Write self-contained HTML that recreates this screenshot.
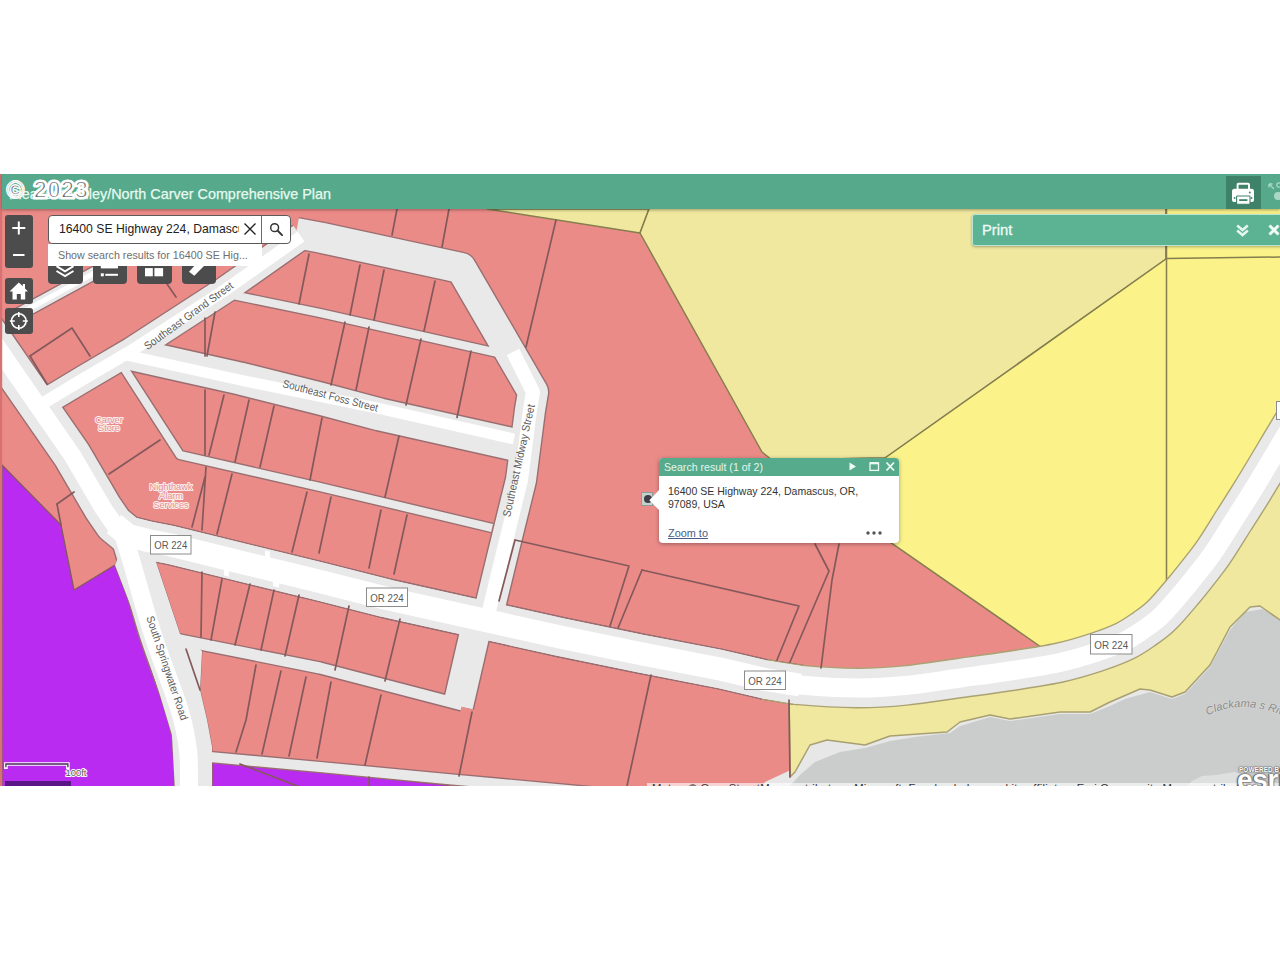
<!DOCTYPE html>
<html lang="en">
<head>
<meta charset="utf-8">
<title>Pleasant Valley/North Carver Comprehensive Plan</title>
<style>
*{box-sizing:border-box;margin:0;padding:0}
html,body{width:1280px;height:960px;background:#fff;overflow:hidden;font-family:"Liberation Sans",sans-serif}
#app{position:absolute;left:0;top:174px;width:1280px;height:612px;overflow:hidden;background:#eb8b88}
#map{position:absolute;left:0;top:0;width:1280px;height:612px;display:block}
.abs{position:absolute}
#hdr{left:2px;top:0.4px;width:1278px;height:35px;background:#56a98b;box-shadow:0 1px 3px rgba(0,0,0,.35)}
#title{left:9px;top:11.6px;font-size:14.4px;-webkit-text-stroke:.25px #e6faf0;color:#e6faf0;white-space:nowrap;letter-spacing:0}
#wm{left:5px;top:1px;font-family:"Liberation Serif",serif;font-weight:bold;font-size:28px;line-height:32px;color:#fff;white-space:nowrap;-webkit-text-stroke:0.6px #444;paint-order:stroke fill}
.dk{background:#4c4c4c;border-radius:3px}
</style>
</head>
<body>
<div id="app">
<svg id="map" viewBox="0 174 1280 612">
<polygon points="2,465 61,525 74,590 115,565 135,617 160,695 168,720 172.5,738 174.5,760 175.5,790 2,790" fill="#b92bf1" stroke="#85595b" stroke-width="1.3" stroke-linejoin="round" />
<polygon points="212,761 320,771.5 447,785 460,790 212,790" fill="#b92bf1" stroke="#85595b" stroke-width="1.3" stroke-linejoin="round" />
<polygon points="487,209 640,233 649,209" fill="#f0e89f" stroke="#857e4e" stroke-width="1.5" stroke-linejoin="round" />
<polygon points="649,209 640,233 762,452 772,460 885,458 1166,259 1166,200 649,200" fill="#f0e89f" stroke="#857e4e" stroke-width="1.5" stroke-linejoin="round" />
<polygon points="1166,200 1166,259 885,458 772,460 1041,647 1060,662.5 1097,652 1125,641 1145,628.5 1162,615 1184,590 1204,565 1215,550 1234,520 1253,490 1283,440 1295,420 1295,200" fill="#fbf38a" stroke="#857e4e" stroke-width="1.5" stroke-linejoin="round" />
<polygon points="760,790 765,782 795,768 810,741 827,736 865,742 890,733 947,729 960,719 990,712 1010,716 1060,709 1090,709 1110,699 1140,686 1150,687 1172,694 1185,689 1207,663 1227,625 1248,604 1262,603 1295,618 1295,790" fill="#e7e7e7" />
<polygon points="786,790 800,775 815,762 840,752 865,748 890,741 915,737 950,733 960,726 990,717 1010,721 1060,714 1090,714 1110,706 1125,699 1150,692 1172,699 1185,694 1210,667 1230,630 1245,612 1262,609 1290,624 1290,790" fill="#cbcdcd" />
<polygon points="789,690 857,688 905,685.5 960,678 1010,671 1060,662.5 1097,652 1125,641 1145,628.5 1162,615 1184,590 1204,565 1215,550 1234,520 1253,490 1283,440 1295,420 1295,622 1280,620 1260,606 1250,607 1230,627 1210,665 1185,692 1172,697 1150,690 1140,689 1110,702 1090,712 1060,712 1010,719 990,715 960,722 947,732 890,736 865,745 827,740 810,745 795,772 790,777" fill="#f0e89f" stroke="#a8a070" stroke-width="1.5" stroke-linejoin="round" />
<polyline points="1166.5,209 1166.5,590" fill="none" stroke="#857e4e" stroke-width="1.5" stroke-linecap="round" stroke-linejoin="round" />
<polyline points="1166.5,258.5 1280,257" fill="none" stroke="#857e4e" stroke-width="1.5" stroke-linecap="round" stroke-linejoin="round" />
<polyline points="8,320 34,306 100,270 160,240" fill="none" stroke="#9a6e70" stroke-width="14.8" stroke-linecap="butt" stroke-linejoin="round" />
<polyline points="38,406 45,402 85,378 131,351 225,290 301,236.5" fill="none" stroke="#9a6e70" stroke-width="28.8" stroke-linecap="butt" stroke-linejoin="round" />
<polyline points="296,233 320,237.5 461,268 533,392 530,410 521,480 505,545 488,615" fill="none" stroke="#9a6e70" stroke-width="32.8" stroke-linecap="butt" stroke-linejoin="round" />
<polyline points="126,353 240,378.5 320,398.5 380,414.5 514,444.5" fill="none" stroke="#9a6e70" stroke-width="34.8" stroke-linecap="butt" stroke-linejoin="round" />
<polyline points="235,295.5 320,313 500,353.5" fill="none" stroke="#9a6e70" stroke-width="10.8" stroke-linecap="butt" stroke-linejoin="round" />
<polyline points="122,365 180,455 320,487 492,528" fill="none" stroke="#9a6e70" stroke-width="10.8" stroke-linecap="butt" stroke-linejoin="round" />
<polyline points="175,639 320,668 462,705" fill="none" stroke="#9a6e70" stroke-width="13.8" stroke-linecap="butt" stroke-linejoin="round" />
<polyline points="190,755 210,757 320,767 447,779 600,793" fill="none" stroke="#9a6e70" stroke-width="12.8" stroke-linecap="butt" stroke-linejoin="round" />
<polyline points="476,628 458,706" fill="none" stroke="#9a6e70" stroke-width="32.8" stroke-linecap="butt" stroke-linejoin="round" />
<path d="M120,525 C121.8,530.8 125.5,541.7 131,560 C136.5,578.3 144.9,610.0 153,635 C161.1,660.0 173.7,690.8 179.5,710 C185.3,729.2 186.4,736.3 188,750 C189.6,763.7 188.8,785.0 189,792" fill="none" stroke="#9a6e70" stroke-width="28.8" stroke-linecap="butt" stroke-linejoin="round" />
<polyline points="-20,322 20,380 72,455 103,508 114,524 128,535.5 148,540.5 171,545 240,562 320,581.5 387,598.5 560,637 640,653.5 720,669 765,679.5 800,685" fill="none" stroke="#9a6e70" stroke-width="40.8" stroke-linecap="butt" stroke-linejoin="round" />
<polyline points="128,535.5 148,540.5 171,545 240,562 320,581.5 387,598.5 560,637 640,653.5 720,669 765,679.5 800,685" fill="none" stroke="#9a6e70" stroke-width="40.8" stroke-linecap="butt" stroke-linejoin="round" />
<path d="M765,679.5 C770.8,680.4 784.7,683.6 800,685 C815.3,686.4 839.5,687.9 857,688 C874.5,688.1 887.8,687.2 905,685.5 C922.2,683.8 942.5,680.4 960,678 C977.5,675.6 993.3,673.6 1010,671 C1026.7,668.4 1045.5,665.7 1060,662.5 C1074.5,659.3 1086.2,655.6 1097,652 C1107.8,648.4 1117.0,644.9 1125,641 C1133.0,637.1 1138.8,632.8 1145,628.5 C1151.2,624.2 1155.5,621.4 1162,615 C1168.5,608.6 1177.0,598.3 1184,590 C1191.0,581.7 1198.8,571.7 1204,565 C1209.2,558.3 1210.0,557.5 1215,550 C1220.0,542.5 1227.7,530.0 1234,520 C1240.3,510.0 1244.8,503.3 1253,490 C1261.2,476.7 1276.0,451.7 1283,440 C1290.0,428.3 1293.0,423.3 1295,420" fill="none" stroke="#aaa273" stroke-width="40.8" stroke-linecap="butt" stroke-linejoin="round" />
<polygon points="127,537 150,556 156,562 180,634 202,651 200,690 207,720 212,747 212,790 175,790 172,735 160,695 135,617 115,565" fill="#e9e9e9" stroke="#9a6e70" stroke-width="1" stroke-linejoin="round" />
<polyline points="8,320 34,306 100,270 160,240" fill="none" stroke="#e9e9e9" stroke-width="12" stroke-linecap="butt" stroke-linejoin="round" />
<polyline points="38,406 45,402 85,378 131,351 225,290 301,236.5" fill="none" stroke="#e9e9e9" stroke-width="26" stroke-linecap="butt" stroke-linejoin="round" />
<polyline points="296,233 320,237.5 461,268 533,392 530,410 521,480 505,545 488,615" fill="none" stroke="#e9e9e9" stroke-width="30" stroke-linecap="butt" stroke-linejoin="round" />
<polyline points="126,353 240,378.5 320,398.5 380,414.5 514,444.5" fill="none" stroke="#e9e9e9" stroke-width="32" stroke-linecap="butt" stroke-linejoin="round" />
<polyline points="235,295.5 320,313 500,353.5" fill="none" stroke="#e9e9e9" stroke-width="8" stroke-linecap="butt" stroke-linejoin="round" />
<polyline points="122,365 180,455 320,487 492,528" fill="none" stroke="#e9e9e9" stroke-width="8" stroke-linecap="butt" stroke-linejoin="round" />
<polyline points="175,639 320,668 462,705" fill="none" stroke="#e9e9e9" stroke-width="11" stroke-linecap="butt" stroke-linejoin="round" />
<polyline points="190,755 210,757 320,767 447,779 600,793" fill="none" stroke="#e9e9e9" stroke-width="10" stroke-linecap="butt" stroke-linejoin="round" />
<polyline points="476,628 458,706" fill="none" stroke="#e9e9e9" stroke-width="30" stroke-linecap="butt" stroke-linejoin="round" />
<path d="M120,525 C121.8,530.8 125.5,541.7 131,560 C136.5,578.3 144.9,610.0 153,635 C161.1,660.0 173.7,690.8 179.5,710 C185.3,729.2 186.4,736.3 188,750 C189.6,763.7 188.8,785.0 189,792" fill="none" stroke="#e9e9e9" stroke-width="26" stroke-linecap="butt" stroke-linejoin="round" />
<polyline points="-20,322 20,380 72,455 103,508 114,524 128,535.5 148,540.5 171,545 240,562 320,581.5 387,598.5 560,637 640,653.5 720,669 765,679.5 800,685" fill="none" stroke="#e9e9e9" stroke-width="38" stroke-linecap="butt" stroke-linejoin="round" />
<polyline points="128,535.5 148,540.5 171,545 240,562 320,581.5 387,598.5 560,637 640,653.5 720,669 765,679.5 800,685" fill="none" stroke="#e9e9e9" stroke-width="38" stroke-linecap="butt" stroke-linejoin="round" />
<path d="M765,679.5 C770.8,680.4 784.7,683.6 800,685 C815.3,686.4 839.5,687.9 857,688 C874.5,688.1 887.8,687.2 905,685.5 C922.2,683.8 942.5,680.4 960,678 C977.5,675.6 993.3,673.6 1010,671 C1026.7,668.4 1045.5,665.7 1060,662.5 C1074.5,659.3 1086.2,655.6 1097,652 C1107.8,648.4 1117.0,644.9 1125,641 C1133.0,637.1 1138.8,632.8 1145,628.5 C1151.2,624.2 1155.5,621.4 1162,615 C1168.5,608.6 1177.0,598.3 1184,590 C1191.0,581.7 1198.8,571.7 1204,565 C1209.2,558.3 1210.0,557.5 1215,550 C1220.0,542.5 1227.7,530.0 1234,520 C1240.3,510.0 1244.8,503.3 1253,490 C1261.2,476.7 1276.0,451.7 1283,440 C1290.0,428.3 1293.0,423.3 1295,420" fill="none" stroke="#e9e9e9" stroke-width="38" stroke-linecap="butt" stroke-linejoin="round" />
<polygon points="127,537 150,556 156,562 180,634 202,651 200,690 207,720 212,747 212,790 175,790 172,735 160,695 135,617 115,565" fill="#e9e9e9" />
<polyline points="8,320 34,306 100,270 160,240" fill="none" stroke="#fff" stroke-width="5" stroke-linecap="butt" stroke-linejoin="round" />
<polyline points="38,406 45,402 85,378 131,351 225,290 301,236.5" fill="none" stroke="#fff" stroke-width="12" stroke-linecap="butt" stroke-linejoin="round" />
<polyline points="126,355 240,380 380,408.7 514,439" fill="none" stroke="#fff" stroke-width="11" stroke-linecap="butt" stroke-linejoin="round" />
<path d="M120,525 C121.8,530.8 125.5,541.7 131,560 C136.5,578.3 144.9,610.0 153,635 C161.1,660.0 173.7,690.8 179.5,710 C185.3,729.2 186.4,736.3 188,750 C189.6,763.7 188.8,785.0 189,792" fill="none" stroke="#fff" stroke-width="18" stroke-linecap="butt" stroke-linejoin="round" />
<path d="M765,679.5 C770.8,680.4 784.7,683.6 800,685 C815.3,686.4 839.5,687.9 857,688 C874.5,688.1 887.8,687.2 905,685.5 C922.2,683.8 942.5,680.4 960,678 C977.5,675.6 993.3,673.6 1010,671 C1026.7,668.4 1045.5,665.7 1060,662.5 C1074.5,659.3 1086.2,655.6 1097,652 C1107.8,648.4 1117.0,644.9 1125,641 C1133.0,637.1 1138.8,632.8 1145,628.5 C1151.2,624.2 1155.5,621.4 1162,615 C1168.5,608.6 1177.0,598.3 1184,590 C1191.0,581.7 1198.8,571.7 1204,565 C1209.2,558.3 1210.0,557.5 1215,550 C1220.0,542.5 1227.7,530.0 1234,520 C1240.3,510.0 1244.8,503.3 1253,490 C1261.2,476.7 1276.0,451.7 1283,440 C1290.0,428.3 1293.0,423.3 1295,420" fill="none" stroke="#fff" stroke-width="19" stroke-linecap="butt" stroke-linejoin="round" />
<polyline points="513,352 533,392 530,410 521,480 505,545 488,615" fill="none" stroke="#fff" stroke-width="14" stroke-linecap="butt" stroke-linejoin="round" />
<polyline points="-20,322 20,380 72,455 103,508 114,524 128,535.5" fill="none" stroke="#fff" stroke-width="17.5" stroke-linecap="butt" stroke-linejoin="round" />
<polyline points="114,524 128,535.5 148,540.5 171,545 240,562 320,581.5 387,598.5 560,637 640,653.5 720,669 765,679.5 800,685" fill="none" stroke="#fff" stroke-width="23" stroke-linecap="butt" stroke-linejoin="round" />
<polygon points="265,550.5 270,551.5 270,561 265,560" fill="#fff" />
<polygon points="224,566 229,567 229,576.5 224,575.5" fill="#fff" />
<polygon points="273,578 279,579.3 279,587.5 273,586.2" fill="#fff" />
<polyline points="397,209 392,235" fill="none" stroke="#85595b" stroke-width="1.7" stroke-linecap="round" stroke-linejoin="round" />
<polyline points="449,209 442,247" fill="none" stroke="#85595b" stroke-width="1.7" stroke-linecap="round" stroke-linejoin="round" />
<polyline points="556,220 526,347" fill="none" stroke="#85595b" stroke-width="1.7" stroke-linecap="round" stroke-linejoin="round" />
<polyline points="309,254 299,304" fill="none" stroke="#85595b" stroke-width="1.7" stroke-linecap="round" stroke-linejoin="round" />
<polyline points="360,265 350,315" fill="none" stroke="#85595b" stroke-width="1.7" stroke-linecap="round" stroke-linejoin="round" />
<polyline points="384,270 374,320" fill="none" stroke="#85595b" stroke-width="1.7" stroke-linecap="round" stroke-linejoin="round" />
<polyline points="435,281 424,331" fill="none" stroke="#85595b" stroke-width="1.7" stroke-linecap="round" stroke-linejoin="round" />
<polyline points="345,322 331,385" fill="none" stroke="#85595b" stroke-width="1.7" stroke-linecap="round" stroke-linejoin="round" />
<polyline points="369,327 356,390" fill="none" stroke="#85595b" stroke-width="1.7" stroke-linecap="round" stroke-linejoin="round" />
<polyline points="421,339 406,405" fill="none" stroke="#85595b" stroke-width="1.7" stroke-linecap="round" stroke-linejoin="round" />
<polyline points="471,351 457,417.5" fill="none" stroke="#85595b" stroke-width="1.7" stroke-linecap="round" stroke-linejoin="round" />
<polyline points="205,318 205,356" fill="none" stroke="#85595b" stroke-width="1.7" stroke-linecap="round" stroke-linejoin="round" />
<polyline points="215,312 207,356" fill="none" stroke="#85595b" stroke-width="1.7" stroke-linecap="round" stroke-linejoin="round" />
<polyline points="205,390 205,455" fill="none" stroke="#85595b" stroke-width="1.7" stroke-linecap="round" stroke-linejoin="round" />
<polyline points="224,395 209,455" fill="none" stroke="#85595b" stroke-width="1.7" stroke-linecap="round" stroke-linejoin="round" />
<polyline points="249,400 235,462" fill="none" stroke="#85595b" stroke-width="1.7" stroke-linecap="round" stroke-linejoin="round" />
<polyline points="274,406 260,467" fill="none" stroke="#85595b" stroke-width="1.7" stroke-linecap="round" stroke-linejoin="round" />
<polyline points="322,418 310,480" fill="none" stroke="#85595b" stroke-width="1.7" stroke-linecap="round" stroke-linejoin="round" />
<polyline points="399,436 385,497" fill="none" stroke="#85595b" stroke-width="1.7" stroke-linecap="round" stroke-linejoin="round" />
<polyline points="206,467 202,530" fill="none" stroke="#85595b" stroke-width="1.7" stroke-linecap="round" stroke-linejoin="round" />
<polyline points="205,477 192,527" fill="none" stroke="#85595b" stroke-width="1.7" stroke-linecap="round" stroke-linejoin="round" />
<polyline points="232,474 217,534" fill="none" stroke="#85595b" stroke-width="1.7" stroke-linecap="round" stroke-linejoin="round" />
<polyline points="307,492 292,552" fill="none" stroke="#85595b" stroke-width="1.7" stroke-linecap="round" stroke-linejoin="round" />
<polyline points="331,497 319,553" fill="none" stroke="#85595b" stroke-width="1.7" stroke-linecap="round" stroke-linejoin="round" />
<polyline points="381,510 369,568" fill="none" stroke="#85595b" stroke-width="1.7" stroke-linecap="round" stroke-linejoin="round" />
<polyline points="407,515 394,574" fill="none" stroke="#85595b" stroke-width="1.7" stroke-linecap="round" stroke-linejoin="round" />
<polyline points="109,474 160,440" fill="none" stroke="#85595b" stroke-width="1.7" stroke-linecap="round" stroke-linejoin="round" />
<polyline points="57,504 61,525" fill="none" stroke="#85595b" stroke-width="1.7" stroke-linecap="round" stroke-linejoin="round" />
<polyline points="57,504 74,492" fill="none" stroke="#85595b" stroke-width="1.7" stroke-linecap="round" stroke-linejoin="round" />
<polyline points="30,356 72,328 90,356" fill="none" stroke="#85595b" stroke-width="1.7" stroke-linecap="round" stroke-linejoin="round" />
<polyline points="30,356 47,384" fill="none" stroke="#85595b" stroke-width="1.7" stroke-linecap="round" stroke-linejoin="round" />
<polyline points="167,284 176,297" fill="none" stroke="#85595b" stroke-width="1.7" stroke-linecap="round" stroke-linejoin="round" />
<polyline points="202,572 201,637" fill="none" stroke="#85595b" stroke-width="1.7" stroke-linecap="round" stroke-linejoin="round" />
<polyline points="222,579 211,640" fill="none" stroke="#85595b" stroke-width="1.7" stroke-linecap="round" stroke-linejoin="round" />
<polyline points="250,584 235,645" fill="none" stroke="#85595b" stroke-width="1.7" stroke-linecap="round" stroke-linejoin="round" />
<polyline points="274,590 261,650" fill="none" stroke="#85595b" stroke-width="1.7" stroke-linecap="round" stroke-linejoin="round" />
<polyline points="299,595 285,656" fill="none" stroke="#85595b" stroke-width="1.7" stroke-linecap="round" stroke-linejoin="round" />
<polyline points="349,606 335,670" fill="none" stroke="#85595b" stroke-width="1.7" stroke-linecap="round" stroke-linejoin="round" />
<polyline points="400,619 385,681" fill="none" stroke="#85595b" stroke-width="1.7" stroke-linecap="round" stroke-linejoin="round" />
<polyline points="256,665 246,720 236,752" fill="none" stroke="#85595b" stroke-width="1.7" stroke-linecap="round" stroke-linejoin="round" />
<polyline points="281,671 262,754" fill="none" stroke="#85595b" stroke-width="1.7" stroke-linecap="round" stroke-linejoin="round" />
<polyline points="306,677 289,756" fill="none" stroke="#85595b" stroke-width="1.7" stroke-linecap="round" stroke-linejoin="round" />
<polyline points="331,682 317,758" fill="none" stroke="#85595b" stroke-width="1.7" stroke-linecap="round" stroke-linejoin="round" />
<polyline points="381,695 365,765" fill="none" stroke="#85595b" stroke-width="1.7" stroke-linecap="round" stroke-linejoin="round" />
<polyline points="472,712 459,776" fill="none" stroke="#85595b" stroke-width="1.7" stroke-linecap="round" stroke-linejoin="round" />
<polyline points="186,649 200,690" fill="none" stroke="#85595b" stroke-width="1.7" stroke-linecap="round" stroke-linejoin="round" />
<polyline points="515,540 629,566 610,626" fill="none" stroke="#85595b" stroke-width="1.7" stroke-linecap="round" stroke-linejoin="round" />
<polyline points="515,540 499,601" fill="none" stroke="#85595b" stroke-width="1.7" stroke-linecap="round" stroke-linejoin="round" />
<polyline points="642,570 799,606 777,660" fill="none" stroke="#85595b" stroke-width="1.7" stroke-linecap="round" stroke-linejoin="round" />
<polyline points="642,570 618,628" fill="none" stroke="#85595b" stroke-width="1.7" stroke-linecap="round" stroke-linejoin="round" />
<polyline points="815,544 829,571 790,662" fill="none" stroke="#85595b" stroke-width="1.7" stroke-linecap="round" stroke-linejoin="round" />
<polyline points="839,544 832,580 821,668" fill="none" stroke="#85595b" stroke-width="1.7" stroke-linecap="round" stroke-linejoin="round" />
<polyline points="651,675 627,786" fill="none" stroke="#85595b" stroke-width="1.7" stroke-linecap="round" stroke-linejoin="round" />
<polyline points="789,700 790,777" fill="none" stroke="#85595b" stroke-width="1.7" stroke-linecap="round" stroke-linejoin="round" />
<polyline points="369,777 369,786" fill="none" stroke="#85595b" stroke-width="1.7" stroke-linecap="round" stroke-linejoin="round" />
<polyline points="240,764 300,787" fill="none" stroke="#85595b" stroke-width="1.7" stroke-linecap="round" stroke-linejoin="round" />
<text x="188.5" y="315.5" transform="rotate(-36 188.5 315.5)" text-anchor="middle" dominant-baseline="central" font-family="Liberation Sans, sans-serif" font-size="11" fill="#5c5c5c" textLength="107" lengthAdjust="spacingAndGlyphs" >Southeast Grand Street</text>
<text x="330.5" y="395.5" transform="rotate(14.7 330.5 395.5)" text-anchor="middle" dominant-baseline="central" font-family="Liberation Sans, sans-serif" font-size="11" fill="#5c5c5c" textLength="98" lengthAdjust="spacingAndGlyphs" >Southeast Foss Street</text>
<text x="518.5" y="460.5" transform="rotate(-77.5 518.5 460.5)" text-anchor="middle" dominant-baseline="central" font-family="Liberation Sans, sans-serif" font-size="11" fill="#5c5c5c" textLength="115" lengthAdjust="spacingAndGlyphs" >Southeast Midway Street</text>
<text x="167.5" y="668" transform="rotate(71.4 167.5 668)" text-anchor="middle" dominant-baseline="central" font-family="Liberation Sans, sans-serif" font-size="11" fill="#5c5c5c" textLength="109" lengthAdjust="spacingAndGlyphs" >South Springwater Road</text>
<path id="rv" d="M1207.5,715.5 Q1246,696.5 1292,720" fill="none"/><text font-family="Liberation Sans, sans-serif" font-style="italic" font-size="11.2" fill="#8b8b8b" stroke="#d6d8d8" stroke-width="1.2" paint-order="stroke fill" letter-spacing="0"><textPath href="#rv">Clackama s River</textPath></text>
<polygon points="1186,787 1192,781 1202,776 1216,775 1234,772 1242,774 1245,787" fill="#dedfdf" />
<rect x="150.5" y="535.5" width="40.5" height="18.5" fill="#fff" stroke="#8c8c8c" stroke-width="1"/><text x="170.75" y="545.05" text-anchor="middle" dominant-baseline="central" font-family="Liberation Sans, sans-serif" font-size="11" fill="#5a5a5a" textLength="33.0" lengthAdjust="spacingAndGlyphs">OR 224</text>
<rect x="366.5" y="588" width="41.0" height="18.5" fill="#fff" stroke="#8c8c8c" stroke-width="1"/><text x="387.0" y="597.55" text-anchor="middle" dominant-baseline="central" font-family="Liberation Sans, sans-serif" font-size="11" fill="#5a5a5a" textLength="33.5" lengthAdjust="spacingAndGlyphs">OR 224</text>
<rect x="744.5" y="671" width="41.0" height="18.5" fill="#fff" stroke="#8c8c8c" stroke-width="1"/><text x="765.0" y="680.55" text-anchor="middle" dominant-baseline="central" font-family="Liberation Sans, sans-serif" font-size="11" fill="#5a5a5a" textLength="33.5" lengthAdjust="spacingAndGlyphs">OR 224</text>
<rect x="1090.5" y="634.5" width="41.5" height="19.5" fill="#fff" stroke="#8c8c8c" stroke-width="1"/><text x="1111.25" y="644.55" text-anchor="middle" dominant-baseline="central" font-family="Liberation Sans, sans-serif" font-size="11" fill="#5a5a5a" textLength="34.0" lengthAdjust="spacingAndGlyphs">OR 224</text>
<rect x="1276.5" y="401.5" width="12" height="18" fill="#fff" stroke="#8c8c8c" stroke-width="1"/>
<text x="109" y="422.5" text-anchor="middle" font-family="Liberation Sans, sans-serif" font-size="9.2" fill="#e58f8d" stroke="#fbeeee" stroke-width="2" paint-order="stroke fill" stroke-linejoin="round">Carver</text><text x="109" y="431.3" text-anchor="middle" font-family="Liberation Sans, sans-serif" font-size="9.2" fill="#e58f8d" stroke="#fbeeee" stroke-width="2" paint-order="stroke fill" stroke-linejoin="round">Store</text>
<text x="171" y="490.0" text-anchor="middle" font-family="Liberation Sans, sans-serif" font-size="9.2" fill="#e58f8d" stroke="#fbeeee" stroke-width="2" paint-order="stroke fill" stroke-linejoin="round">Nighthawk</text><text x="171" y="498.8" text-anchor="middle" font-family="Liberation Sans, sans-serif" font-size="9.2" fill="#e58f8d" stroke="#fbeeee" stroke-width="2" paint-order="stroke fill" stroke-linejoin="round">Alarm</text><text x="171" y="507.6" text-anchor="middle" font-family="Liberation Sans, sans-serif" font-size="9.2" fill="#e58f8d" stroke="#fbeeee" stroke-width="2" paint-order="stroke fill" stroke-linejoin="round">Services</text>
<rect x="0" y="174" width="2.2" height="612" fill="#d87272"/>
</svg>
<div class="abs" id="hdr"></div>
<div class="abs" id="title">Pleasant Valley/North Carver Comprehensive Plan</div>
<svg class="abs" style="left:0;top:0" width="120" height="36" viewBox="0 0 120 36"><g font-family="Liberation Sans, sans-serif" font-weight="bold" font-size="24" stroke-linejoin="round"><text x="6.5" y="24.2" fill="#fff" stroke="#fff" stroke-width="1.6">©</text><text x="33.6" y="24.2" fill="#fff" stroke="#fff" stroke-width="3.2" textLength="54.5" lengthAdjust="spacingAndGlyphs">2023</text><text x="6.5" y="24.2" fill="#707070" stroke="#fff" stroke-width="1">©</text><text x="33.6" y="24.2" fill="#6a6a6a" stroke="#fff" stroke-width="1.9" textLength="54.5" lengthAdjust="spacingAndGlyphs">2023</text></g></svg>
<!-- header buttons -->
<div class="abs" style="left:1225.5px;top:2px;width:35px;height:33px;background:#3f826a"></div>
<svg class="abs" style="left:1231px;top:8px" width="24" height="24" viewBox="0 0 24 24">
 <rect x="6.6" y="1.8" width="11.4" height="7" rx="0.8" fill="none" stroke="#fff" stroke-width="1.9"/>
 <rect x="1" y="6.8" width="22" height="13.2" rx="2.6" fill="#fff"/>
 <rect x="5.6" y="14" width="13.4" height="8.2" rx="0.8" fill="#fff" stroke="#3f826a" stroke-width="1.1"/>
 <rect x="8.2" y="17.2" width="8.2" height="1.8" fill="#3f826a"/>
 <circle cx="18.8" cy="10.6" r="1" fill="#3f826a"/><circle cx="3.6" cy="16" r=".9" fill="#3f826a"/><circle cx="20.6" cy="16" r=".9" fill="#3f826a"/>
</svg>
<svg class="abs" style="left:1268px;top:6px" width="14" height="24" viewBox="0 0 14 24">
 <g fill="none" stroke="#a9d8c6" stroke-width="1.3"><path d="M1,4 L6,9 M1,4 h3.5 M1,4 v3.5"/></g>
 <circle cx="10" cy="16" r="4" fill="#a9d8c6"/><circle cx="11" cy="5" r="2.2" fill="none" stroke="#a9d8c6" stroke-width="1.2"/>
</svg>
<!-- print panel -->
<div class="abs" style="left:972px;top:40px;width:320px;height:31.5px;background:#5bb394;border:1.5px solid #b9e6d3;border-radius:3px 0 0 3px;box-shadow:0 1px 3px rgba(0,0,0,.3)"></div>
<div class="abs" style="left:982px;top:47px;font-size:14.8px;color:#f0fbf6;line-height:18px;-webkit-text-stroke:.3px #f0fbf6">Print</div>
<svg class="abs" style="left:1236px;top:50px" width="13" height="13" viewBox="0 0 13 13"><path d="M1.2,1.5 L6.5,6 L11.8,1.5 M1.2,6.5 L6.5,11 L11.8,6.5" fill="none" stroke="#e6f7ef" stroke-width="2.5"/></svg>
<svg class="abs" style="left:1268px;top:50px" width="12" height="12" viewBox="0 0 12 12"><path d="M1.5,1.5 L10.5,10.5 M10.5,1.5 L1.5,10.5" fill="none" stroke="#f2fbf7" stroke-width="3"/></svg>
<!-- zoom buttons -->
<div class="abs dk" style="left:5px;top:41px;width:27.5px;height:52.5px"></div>
<svg class="abs" style="left:5px;top:41px" width="28" height="53" viewBox="0 0 28 53"><path d="M13.8,6.5 v13 M7.3,13 h13 M8,40 h11.5" stroke="#fff" stroke-width="2" fill="none"/></svg>
<div class="abs dk" style="left:5px;top:103.5px;width:27.5px;height:26px"></div>
<svg class="abs" style="left:5px;top:103.5px" width="28" height="26" viewBox="0 0 28 26"><path d="M13.8,4.5 L4.5,13.5 H7.5 V21.5 H11.8 V16 H15.8 V21.5 H20.2 V13.5 H23 L20,10.5 V6 H17.8 V8.3 Z" fill="#fff"/></svg>
<div class="abs dk" style="left:5px;top:134px;width:27.5px;height:26px"></div>
<svg class="abs" style="left:5px;top:134px" width="28" height="26" viewBox="0 0 28 26"><circle cx="13.8" cy="13" r="7.3" fill="none" stroke="#fff" stroke-width="1.6"/><path d="M13.8,4 v5 M13.8,17 v5 M4.8,13 h5 M17.8,13 h5" stroke="#fff" stroke-width="1.6"/></svg>
<!-- four widget buttons -->
<div class="abs dk" style="left:48px;top:76.5px;width:34.5px;height:33px;border-radius:4px"></div>
<div class="abs dk" style="left:92.5px;top:76.5px;width:34.5px;height:33px;border-radius:4px"></div>
<div class="abs dk" style="left:137px;top:76.5px;width:34.5px;height:33px;border-radius:4px"></div>
<div class="abs dk" style="left:181.5px;top:76.5px;width:34.5px;height:33px;border-radius:4px"></div>
<svg class="abs" style="left:48px;top:79.5px" width="170" height="33" viewBox="0 0 170 33">
 <path d="M8.5,12.2 L17,17.3 L25.5,12.2 M8.5,17 L17,22.1 L25.5,17" fill="none" stroke="#fff" stroke-width="2"/>
 <rect x="52.8" y="19.3" width="3" height="3" fill="#fff"/><rect x="57.3" y="19.8" width="12.6" height="2" fill="#fff"/><rect x="52.8" y="11" width="17.2" height="3.4" fill="#fff"/>
 <rect x="97" y="14.1" width="7.8" height="8.2" fill="#fff"/><rect x="106.4" y="14.1" width="8.7" height="8.2" fill="#fff"/>
 <path d="M141,17.8 L146.3,21.8 L156,12 L150,8 Z" fill="#fff"/>
</svg>
<!-- search -->
<div class="abs" style="left:48px;top:41px;width:242.5px;height:28.5px;background:#fff;border:1px solid #5a5a5a;border-radius:4px"></div>
<div class="abs" style="left:261px;top:42px;width:1px;height:26.5px;background:#6a6a6a"></div>
<div class="abs" style="left:59px;top:47px;width:180px;overflow:hidden;font-size:12.2px;line-height:16px;color:#222;white-space:nowrap">16400 SE Highway 224, Damascus, OR</div>
<svg class="abs" style="left:243px;top:48px" width="14" height="14" viewBox="0 0 14 14"><path d="M1.5,1.5 L12.5,12.5 M12.5,1.5 L1.5,12.5" stroke="#222" stroke-width="1.4" fill="none"/></svg>
<svg class="abs" style="left:268.5px;top:48px" width="14.5" height="14.5" viewBox="0 0 17 17"><circle cx="6.6" cy="6.6" r="4.6" fill="none" stroke="#333" stroke-width="1.7"/><path d="M10,10 L15.3,15.3" stroke="#333" stroke-width="2.2" stroke-linecap="round"/></svg>
<div class="abs" style="left:48px;top:70px;width:214px;height:21.5px;background:#fff"></div>
<div class="abs" style="left:58px;top:73.7px;font-size:11.2px;line-height:15px;color:#6e6e6e;white-space:nowrap;transform:scaleX(.957);transform-origin:0 0">Show search results for 16400 SE Hig...</div>
<!-- popup -->
<div class="abs" style="left:659px;top:284px;width:240px;height:85px;background:#fff;border-radius:4px;box-shadow:0 1px 4px rgba(0,0,0,.35)"></div>
<div class="abs" style="left:659px;top:284px;width:240px;height:17.5px;background:#56ab8c;border-radius:4px 4px 0 0"></div>
<div class="abs" style="left:640.5px;top:318px;width:12.5px;height:13.5px;background:#c3d2cd;border:1px solid #8e9b98"></div>
<div class="abs" style="left:643.5px;top:320.75px;width:8px;height:8px;border-radius:50%;background:#3e3e46"></div>
<svg class="abs" style="left:649px;top:315px" width="11" height="22" viewBox="0 0 11 22"><path d="M11,0 L0.3,11.3 L11,22 Z" fill="#fff"/></svg>
<div class="abs" style="left:664px;top:286px;font-size:10.6px;line-height:14px;color:#e4f5ed;white-space:nowrap">Search result (1 of 2)</div>
<svg class="abs" style="left:846px;top:286px" width="52" height="13" viewBox="0 0 52 13">
 <path d="M3.5,2.5 L10,6.5 L3.5,10.5 Z" fill="#eefaf5"/>
 <rect x="24" y="2.8" width="8.5" height="7.6" fill="none" stroke="#eefaf5" stroke-width="1.3"/><rect x="24" y="2.3" width="8.5" height="2" fill="#eefaf5"/>
 <path d="M40.5,2.5 L48,10.5 M48,2.5 L40.5,10.5" stroke="#eefaf5" stroke-width="1.8" fill="none"/>
</svg>
<div class="abs" style="left:668px;top:311px;font-size:10.9px;line-height:12.6px;color:#333;white-space:nowrap;transform:scaleX(.967);transform-origin:0 0">16400 SE Highway 224, Damascus, OR,<br>97089, USA</div>
<div class="abs" style="left:668px;top:352.7px;font-size:10.9px;line-height:13px;color:#4a5d86;text-decoration:underline;white-space:nowrap">Zoom to</div>
<svg class="abs" style="left:865px;top:356px" width="18" height="6" viewBox="0 0 18 6"><circle cx="3" cy="3" r="1.7" fill="#555"/><circle cx="9" cy="3" r="1.7" fill="#555"/><circle cx="15" cy="3" r="1.7" fill="#555"/></svg>
<!-- scale bar -->
<svg class="abs" style="left:3px;top:587px" width="90" height="20" viewBox="0 0 90 20">
 <path d="M2.9,6.3 V3 H64.9 V6.3" fill="none" stroke="#fff" stroke-width="3.6" stroke-linejoin="miter" stroke-linecap="square"/>
 <path d="M2.9,6.3 V3 H64.9 V6.3" fill="none" stroke="#4a2a5a" stroke-width="1.3"/>
 <text x="62.5" y="15.4" font-family="Liberation Sans, sans-serif" font-size="9.4" fill="#555" stroke="#fff" stroke-width="2" paint-order="stroke fill" stroke-linejoin="round">100ft</text>
</svg>
<div class="abs" style="left:4.5px;top:606.6px;width:66px;height:8px;background:#5a1686"></div>
<!-- attribution -->
<div class="abs" style="left:647px;top:608.5px;width:640px;height:6px;background:rgba(255,255,255,.62)"></div>
<div class="abs" style="left:652px;top:608px;width:590px;height:4px;overflow:hidden;font-size:11.3px;line-height:12px;color:#333;white-space:nowrap;letter-spacing:.2px">Metro, © OpenStreetMap contributors, Microsoft, Facebook, Inc. and its affiliates, Esri Community Maps contributors, Map layer by Esri</div>
<!-- esri logo -->
<div class="abs" style="left:1239px;top:591.5px;font-size:6.4px;line-height:7px;font-weight:bold;color:#fff;white-space:nowrap;letter-spacing:.1px;text-shadow:0 0 1.5px #555,0 0 1.5px #555,0 0 1px #555">POWERED BY</div>
<div class="abs" style="left:1237px;top:590.5px;font-size:28px;line-height:30px;font-weight:bold;color:#fff;white-space:nowrap;letter-spacing:-.3px;text-shadow:0 0 2px #555,0 0 2px #555,-1px 0 1px #666">esri</div>

</div>
</body>
</html>
